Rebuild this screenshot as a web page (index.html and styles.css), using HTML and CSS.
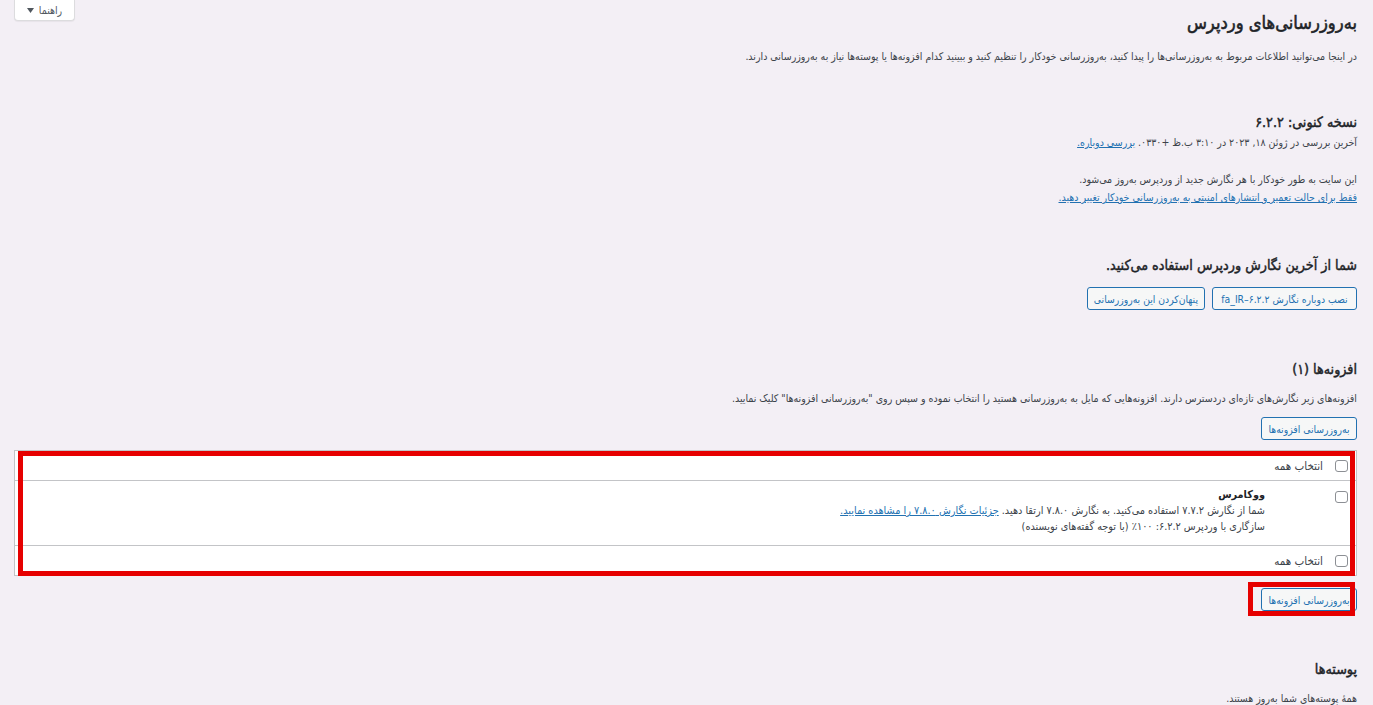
FILE: index.html
```html
<!DOCTYPE html>
<html lang="fa" dir="rtl">
<head>
<meta charset="utf-8">
<title>به‌روزرسانی‌های وردپرس</title>
<link rel="stylesheet" href="styles.css">
</head>
<body>
<div class="page">
  <button class="help-tab" type="button">راهنما <svg class="caret" width="7" height="5" viewBox="0 0 7 5"><path d="M0 0h7L3.5 5z" fill="#50575e"/></svg></button>
  <h1 class="title">به‌روزرسانی‌های وردپرس</h1>
  <p class="intro">در اینجا می‌توانید اطلاعات مربوط به به‌روزرسانی‌ها را پیدا کنید، به‌روزرسانی خودکار را تنظیم کنید و ببینید کدام افزونه‌ها یا پوسته‌ها نیاز به به‌روزرسانی دارند.</p>

  <h2 class="h2 h2-version">نسخه کنونی: ۶.۲.۲</h2>
  <p class="line">آخرین بررسی در ژوئن ۱۸, ۲۰۲۳ در ۳:۱۰ ب.ظ +۰۳۳۰. <a href="#" class="link">بررسی دوباره.</a></p>

  <p class="line auto">این سایت به طور خودکار با هر نگارش جدید از وردپرس به‌روز می‌شود.<br><a href="#" class="link">فقط برای حالت تعمیر و انتشارهای امنیتی به به‌روزرسانی خودکار تغییر دهید.</a></p>

  <h2 class="h2 h2-latest">شما از آخرین نگارش وردپرس استفاده می‌کنید.</h2>
  <div class="btn-row">
    <button class="btn btn-reinstall" type="button">نصب دوباره نگارش ۶.۲.۲–fa_IR</button>
    <button class="btn btn-hide" type="button">پنهان‌کردن این به‌روزرسانی</button>
  </div>

  <h2 class="h2 h2-plugins">افزونه‌ها (۱)</h2>
  <p class="line plugins-desc">افزونه‌های زیر نگارش‌های تازه‌ای دردسترس دارند. افزونه‌هایی که مایل به به‌روزرسانی هستید را انتخاب نموده و سپس روی "به‌روزرسانی افزونه‌ها" کلیک نمایید.</p>
  <div class="btn-row btn-row-top">
    <button class="btn btn-update" type="button">به‌روزرسانی افزونه‌ها</button>
  </div>

  <div class="table-wrap">
    <div class="table">
      <div class="row row-head">
        <span class="cb-cell"><input type="checkbox" class="cb"></span>
        <span class="cell-text">انتخاب همه</span>
      </div>
      <div class="row row-plugin">
        <span class="cb-cell cb-top"><input type="checkbox" class="cb"></span>
        <span class="plugin-icon"></span>
        <div class="cell-text plugin-info">
          <strong class="plugin-name">ووکامرس</strong><br>
          شما از نگارش ۷.۷.۲ استفاده می‌کنید. به نگارش ۷.۸.۰ ارتقا دهید. <a href="#" class="link">جزئیات نگارش ۷.۸.۰ را مشاهده نمایید.</a><br>
          سازگاری با وردپرس ۶.۲.۲: ۱۰۰٪ (با توجه گفته‌های نویسنده)
        </div>
      </div>
      <div class="row row-foot">
        <span class="cb-cell"><input type="checkbox" class="cb"></span>
        <span class="cell-text">انتخاب همه</span>
      </div>
    </div>
    <div class="mark mark-table"></div>
  </div>

  <div class="btn-row btn-row-bottom">
    <div class="btn-mark-wrap">
      <button class="btn btn-update" type="button">به‌روزرسانی افزونه‌ها</button>
      <div class="mark mark-btn"></div>
    </div>
  </div>

  <h2 class="h2 h2-themes">پوسته‌ها</h2>
  <p class="line themes-desc">همهٔ پوسته‌های شما به‌روز هستند.</p>
</div>
</body>
</html>
```

FILE: styles.css
```css
html, body {
  margin: 0;
  padding: 0;
}

body {
  background: #f3eff5;
  color: #3c434a;
  font-family: "DejaVu Sans Condensed", "DejaVu Sans", sans-serif;
  font-size: 10.5px;
  direction: rtl;
  overflow: hidden;
}

.page {
  padding: 8px 16px 0 14px;
}

.help-tab {
  float: left;
  margin-top: -8px;
  width: 61px;
  height: 21px;
  padding: 0;
  background: #fff;
  border: 1px solid #dcdcde;
  border-top: none;
  border-radius: 0 0 4px 4px;
  box-shadow: 0 1px 1px rgba(0, 0, 0, 0.05);
  color: #50575e;
  font-family: inherit;
  font-size: 10.5px;
  display: flex;
  align-items: center;
  justify-content: center;
  gap: 5px;
}

.caret {
  display: block;
}

.title {
  margin: 0;
  font-size: 18.2px;
  line-height: 29px;
  font-weight: 400;
  -webkit-text-stroke: 0.55px #1d2327;
  color: #1d2327;
}

.intro {
  margin: 10px 0 0;
  line-height: 18px;
}

.h2 {
  margin: 0;
  font-size: 14.2px;
  line-height: 20px;
  font-weight: 400;
  -webkit-text-stroke: 0.45px #1d2327;
  color: #1d2327;
}

.h2-version { margin-top: 47px; }
.h2-latest { margin-top: 49px; }
.h2-plugins { margin-top: 49px; }
.h2-themes { margin-top: 48px; }

.line {
  margin: 1px 0 0;
  line-height: 18px;
}

.auto { margin-top: 19px; }
.plugins-desc { margin-top: 10px; }
.themes-desc { margin-top: 10px; }

.link {
  color: #2271b1;
  text-decoration: underline;
}

.btn-row {
  display: flex;
  gap: 7px;
  margin-top: 12px;
}

.btn-row-top { margin-top: 10px; }

.btn {
  height: 23px;
  padding: 0 6px;
  background: #f6f7f7;
  border: 1px solid #2271b1;
  border-radius: 3px;
  color: #2271b1;
  font-family: inherit;
  font-size: 10.3px;
  white-space: nowrap;
}

.btn-reinstall { width: 145px; }
.btn-hide { width: 118px; }
.btn-update { width: 96px; display: block; }

.table-wrap {
  position: relative;
  margin-top: 10px;
}

.table {
  background: #fff;
  border: 1px solid #c3c4c7;
}

.row {
  display: flex;
  align-items: center;
  gap: 12px;
  padding-right: 8px;
}

.row + .row {
  border-top: 1px solid #c3c4c7;
}

.row-head, .row-foot {
  height: 29px;
}

.row-plugin {
  align-items: flex-start;
  height: 65px;
  padding-top: 6px;
  box-sizing: border-box;
}

.cb-cell {
  display: flex;
  width: 13px;
  justify-content: center;
}

.cb-top {
  padding-top: 4px;
}

.plugin-icon {
  width: 46px;
  height: 1px;
}

.cb {
  appearance: none;
  -webkit-appearance: none;
  width: 13px;
  height: 12px;
  margin: 0;
  border: 1px solid #8c8f94;
  border-radius: 3px;
  background: #fff;
  box-sizing: border-box;
}

.cell-text {
  line-height: 16px;
  font-size: 10.8px;
}

.row-head .cell-text,
.row-foot .cell-text {
  font-size: 11.5px;
}

.plugin-name {
  color: #1d2327;
  font-weight: 700;
}

.mark {
  position: absolute;
  border: 5px solid #e60000;
  pointer-events: none;
}

.mark-table {
  top: 1px;
  bottom: 0;
  left: 4px;
  right: 2px;
}

.btn-row-bottom { margin-top: 12px; }

.btn-mark-wrap {
  position: relative;
}

.mark-btn {
  top: -6px;
  bottom: -5px;
  left: -13px;
  right: 2px;
}
```
